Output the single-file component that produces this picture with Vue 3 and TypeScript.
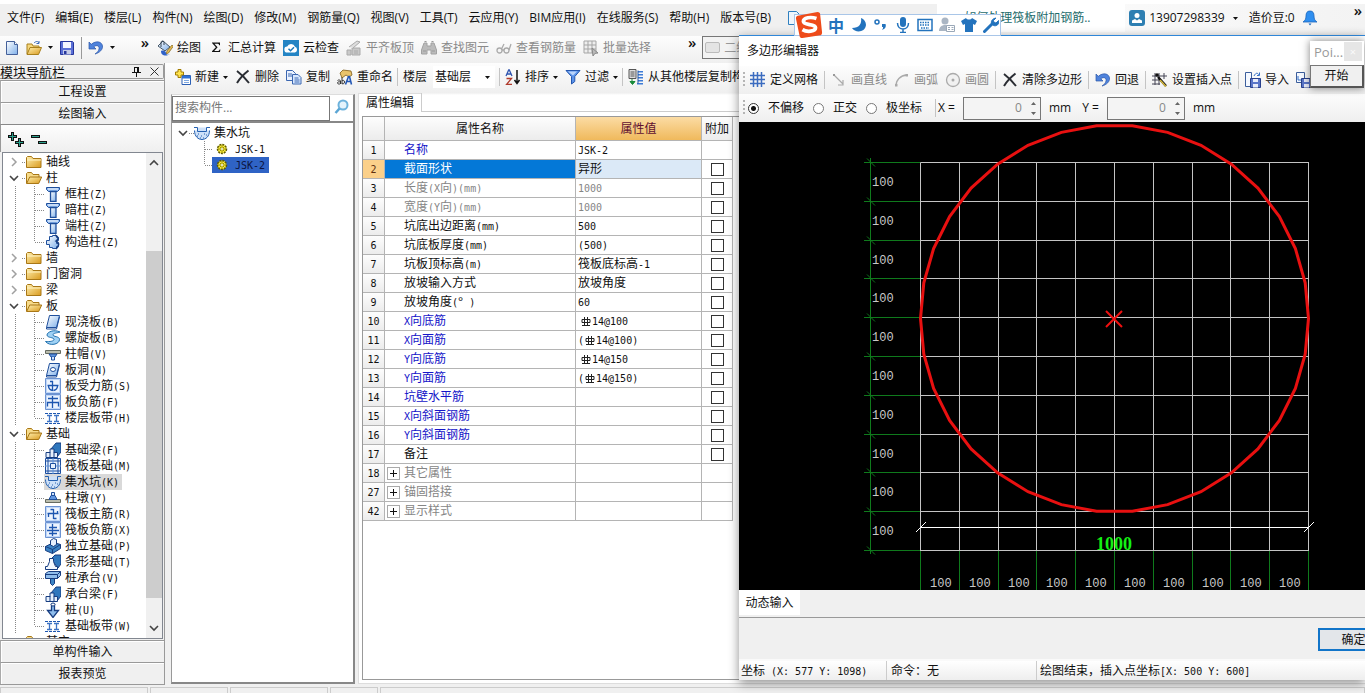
<script setup lang="ts">
import { h, ref } from 'vue'

/** Text whose Latin runs are set in the half-width face. */
const T = (props: { v: string }) =>
  h('span', { class: 'grid-text' }, props.v.split(/([\x20-\x7e]+)/).filter(Boolean).map((part) =>
    /^[\x20-\x7e]/.test(part) ? h('span', { class: 'half' }, part) : part))
T.props = ['v']

const menus = ['文件(F)', '编辑(E)', '楼层(L)', '构件(N)', '绘图(D)', '修改(M)', '钢筋量(Q)', '视图(V)', '工具(T)', '云应用(Y)', 'BIM应用(I)', '在线服务(S)', '帮助(H)', '版本号(B)']

const mainTools = [
  { icon: 'paint', label: '绘图', off: false },
  { icon: 'sigma', label: '汇总计算', off: false },
  { icon: 'cloud', label: '云检查', off: false },
  { icon: 'level', label: '平齐板顶', off: true },
  { icon: 'binoc', label: '查找图元', off: true },
  { icon: 'glasses', label: '查看钢筋量', off: true },
  { icon: 'gridsel', label: '批量选择', off: true },
]

type Leaf = { label: string; icon: string; on?: boolean }
type Branch = { label: string; open: boolean; items: Leaf[] }
const modules: Branch[] = [
  { label: '轴线', open: false, items: [] },
  { label: '柱', open: true, items: [
    { label: '框柱(Z)', icon: 'col' }, { label: '暗柱(Z)', icon: 'col' },
    { label: '端柱(Z)', icon: 'col' }, { label: '构造柱(Z)', icon: 'gcol' }] },
  { label: '墙', open: false, items: [] },
  { label: '门窗洞', open: false, items: [] },
  { label: '梁', open: false, items: [] },
  { label: '板', open: true, items: [
    { label: '现浇板(B)', icon: 'slab' }, { label: '螺旋板(B)', icon: 'spiral' },
    { label: '柱帽(V)', icon: 'cap' }, { label: '板洞(N)', icon: 'hole' },
    { label: '板受力筋(S)', icon: 'barS' }, { label: '板负筋(F)', icon: 'barF' },
    { label: '楼层板带(H)', icon: 'band' }] },
  { label: '基础', open: true, items: [
    { label: '基础梁(F)', icon: 'beam' }, { label: '筏板基础(M)', icon: 'raft' },
    { label: '集水坑(K)', icon: 'pit', on: true }, { label: '柱墩(Y)', icon: 'pier' },
    { label: '筏板主筋(R)', icon: 'barR' }, { label: '筏板负筋(X)', icon: 'barX' },
    { label: '独立基础(P)', icon: 'indep' }, { label: '条形基础(T)', icon: 'stripf' },
    { label: '桩承台(V)', icon: 'pilecap' }, { label: '承台梁(F)', icon: 'beam' },
    { label: '桩(U)', icon: 'pile' }, { label: '基础板带(W)', icon: 'band' }] },
  { label: '其它', open: true, items: [] },
]

type Prop = { n: number; name: string; tone: string; pre?: string; bar?: boolean; val?: string; box?: boolean; group?: boolean }
const props: Prop[] = [
  { n: 1, name: '名称', tone: 'blue', val: 'JSK-2' },
  { n: 2, name: '截面形状', tone: 'sel', val: '异形', box: true },
  { n: 3, name: '长度(X向)(mm)', tone: 'gray', val: '1000', box: true },
  { n: 4, name: '宽度(Y向)(mm)', tone: 'gray', val: '1000', box: true },
  { n: 5, name: '坑底出边距离(mm)', tone: '', val: '500', box: true },
  { n: 6, name: '坑底板厚度(mm)', tone: '', val: '(500)', box: true },
  { n: 7, name: '坑板顶标高(m)', tone: '', val: '筏板底标高-1', box: true },
  { n: 8, name: '放坡输入方式', tone: '', val: '放坡角度', box: true },
  { n: 9, name: '放坡角度(° )', tone: '', val: '60', box: true },
  { n: 10, name: 'X向底筋', tone: 'blue', bar: true, val: '14@100', box: true },
  { n: 11, name: 'X向面筋', tone: 'blue', pre: '(', bar: true, val: '14@100)', box: true },
  { n: 12, name: 'Y向底筋', tone: 'blue', bar: true, val: '14@150', box: true },
  { n: 13, name: 'Y向面筋', tone: 'blue', pre: '(', bar: true, val: '14@150)', box: true },
  { n: 14, name: '坑壁水平筋', tone: 'blue', box: true },
  { n: 15, name: 'X向斜面钢筋', tone: 'blue', box: true },
  { n: 16, name: 'Y向斜面钢筋', tone: 'blue', box: true },
  { n: 17, name: '备注', tone: '', box: true },
  { n: 18, name: '其它属性', tone: 'gray', group: true },
  { n: 27, name: '锚固搭接', tone: 'gray', group: true },
  { n: 42, name: '显示样式', tone: 'gray', group: true },
]

const floor = ref('基础层')
const mode = ref('none')
const modes = [{ id: 'none', label: '不偏移' }, { id: 'ortho', label: '正交' }, { id: 'polar', label: '极坐标' }]
const offX = ref(0)
const offY = ref(0)

/* drawing geometry */
const left = 181.5
const top = 40.5
const cell = 38.8
const lines = Array.from({ length: 11 }, (_, i) => i)
const at = (base: number, i: number) => Math.floor(base + i * cell) + 0.5
const outline = Array.from({ length: 34 }, (_, i) => {
  const a = (i * 2 * Math.PI) / 34
  return `${(375.5 + 194 * Math.cos(a)).toFixed(1)},${(196.5 + 193.5 * Math.sin(a)).toFixed(1)}`
}).join(' ')
</script>

<template>
  <svg class="defs" width="0" height="0" aria-hidden="true">
    <defs>
      <linearGradient id="gb" x1="0" y1="0" x2="1" y2="1"><stop offset="0" stop-color="#fff" /><stop offset="1" stop-color="#7fb0ea" /></linearGradient>
      <linearGradient id="gy" x1="0" y1="0" x2="1" y2="1"><stop offset="0" stop-color="#fff0b0" /><stop offset="1" stop-color="#d99a1e" /></linearGradient>
      <symbol id="new" viewBox="0 0 16 16"><path d="M2.500 1.500h8l3 3v10h-11z" fill="url(#gb)" stroke="#44609a" /><path d="M10.500 1.500v3h3" fill="#fff" stroke="#44609a" /></symbol>
      <symbol id="open" viewBox="0 0 16 16"><path d="M1 14V4h5l1 2h6v3" fill="#f6d77c" stroke="#a8801c" /><path d="M1 14.500l3-7h11.500l-3 7z" fill="url(#gy)" stroke="#a8801c" /><path d="M8 3c2-2 4-2 5 0m0-2v2.500h-2.500" fill="none" stroke="#3768b8" /></symbol>
      <symbol id="save" viewBox="0 0 16 16"><path d="M1.500 1.500h12l1 1v12h-13z" fill="#5a6fd6" stroke="#26369c" /><path d="M4 2h8v6H4z" fill="#f4f6ff" /><path d="M4 10h8v4.500H4z" fill="#c5cce8" /><path d="M5 11h2.500v3H5z" fill="#26369c" /></symbol>
      <symbol id="undo" viewBox="0 0 16 16"><path d="M1 2v7h7L5.800 6.800c3-2.500 6-.5 5.200 2.200-.4 2-2 3.600-4 5 4.600-1.200 8-4.500 7.500-8C14 1.800 8.500 0 3.300 4.300z" fill="#4f83dc" stroke="#2b56a8" stroke-width=".7" /></symbol>
      <symbol id="paint" viewBox="0 0 16 16"><path d="M6 1l7 6-5 4-7-5z" fill="url(#gb)" stroke="#456" /><path d="M4 7V2.500C4 .5 7 .5 7 2.500V5" fill="none" stroke="#345" /><path d="M9 14l1-3 5-6 1.300 1.300L11.500 13z" fill="#e5bb50" stroke="#6d5210" stroke-width=".6" /><path d="M4 11c2-1 5 0 5 2s2 2 4 1c-2 2-9 3-9-3z" fill="#2f62c8" /></symbol>
      <symbol id="sigma" viewBox="-2 -1 20 20"><path d="M3 2h10v3.500h-1C11.600 4 11 3.600 9.500 3.600H6L10 8l-4.200 4.800h4c1.600 0 2.200-.5 2.700-2h1L13 14H3v-.8L7.800 8.200 3 2.800z" fill="#111" /></symbol>
      <symbol id="cloud" viewBox="0 0 16 16"><path d="M0 0h16v16H0z" fill="#2384c4" /><path d="M4.500 12.500a3 3 0 0 1-.3-6A4.200 4.200 0 0 1 12 6.800a3 3 0 0 1 0 5.700z" fill="#fff" /><path d="M5.500 8.800l2 2 3.500-3.500" fill="none" stroke="#1a78b8" stroke-width="1.500" /></symbol>
      <symbol id="level" viewBox="0 0 16 16"><path d="M1 10h4v5H1zM6 8h8v7H6z" fill="#c9c9c9" stroke="#aaa" /><path d="M3 7l8-6 3 1-7 6M8 11h4M8 13h4" fill="#ddd" stroke="#aaa" /></symbol>
      <symbol id="binoc" viewBox="0 0 16 16"><path d="M3 3h3v3h4V3h3l2.500 7v4H10v-4H6v4H.500v-4z" fill="#bbb" stroke="#a2a2a2" /><path d="M3.500 1.500h2M10.500 1.500h2M2 11h3M11 11h3" stroke="#999" /></symbol>
      <symbol id="glasses" viewBox="0 0 16 16"><g fill="none" stroke="#aaa" stroke-width="1.300"><circle cx="3.500" cy="10.500" r="2.500" /><circle cx="10.500" cy="10.500" r="2.500" /><path d="M6 10h2M5.500 9l2.500-5M13 10l2-6" /></g></symbol>
      <symbol id="gridsel" viewBox="0 0 16 16"><path d="M1 1h12v12H1zM1 5h12M1 9h12M5 1v12M9 1v12" fill="#eee" stroke="#a5a5a5" /><path d="M9 8l6 5-3 .3L10 16z" fill="#bbb" stroke="#888" /></symbol>
      <symbol id="add" viewBox="0 0 16 16"><path d="M7 6.500h8.500v9H7z" fill="#fff" stroke="#2b5fb4" /><path d="M7 7h8.500v2.500H7z" fill="#2f71d6" /><path d="M9 11.500h5M9 13.500h5" stroke="#7fa8e0" /><path d="M3 .500h3v2.500h2.500v3H6v2.500H3V6H.500V3H3z" fill="#ffe34d" stroke="#a27c00" /></symbol>
      <symbol id="del" viewBox="0 0 16 16"><path d="M2 2c4 3 8 7 12 12M13.500 1.500C9 5 5 9 2 14" fill="none" stroke="#2a2d33" stroke-width="2" /></symbol>
      <symbol id="copy" viewBox="0 0 16 16"><path d="M.500 1.500h6l3 3v7h-9z" fill="#eaf2ff" stroke="#3b66b0" /><path d="M6.500 5.500h5.500l3 3v6.500H6.500z" fill="#d8e8ff" stroke="#3b66b0" /><path d="M2 5h4M2 7h4M8.500 9h4M8.500 11h5M8.500 13h5" stroke="#3b66b0" /></symbol>
      <symbol id="rename" viewBox="0 0 16 16"><path d="M3 4l3-3 8 1 1 4-3 2-3-2-4 3z" fill="#e9c36b" stroke="#7d5a15" stroke-width=".8" /><path d="M8.500 15.500l3-8h1l2 8m-5-3h4.500" fill="none" stroke="#2357b5" stroke-width="1.600" /><path d="M.500 11.500c1-1 3-.5 3 .5v3m0-2c-2-.5-3 0-3 1s2 1.500 3 .5M5 8.500v6.500m0-3c1-1.500 2.500-.5 2.500 1S6 15.500 5 14.500" fill="none" stroke="#333" /></symbol>
      <symbol id="sort" viewBox="0 0 16 16"><path d="M1 7l2.700-6h.6L7 7M2 5h4" fill="none" stroke="#2f55b0" stroke-width="1.300" /><path d="M1.500 9.500h5l-5 6h5.500" fill="none" stroke="#b03a2c" stroke-width="1.300" /><path d="M12 1v13M9.500 11l2.500 3.500L14.500 11" fill="none" stroke="#111" stroke-width="1.500" /></symbol>
      <symbol id="filter" viewBox="0 0 16 16"><path d="M1 1.500h14L9.800 7.500v5L6.500 15V7.500z" fill="#5b93ea" stroke="#2456ae" /><path d="M3 2.500h9L8 6.500" fill="#b9d4fb" /></symbol>
      <symbol id="fcopy" viewBox="0 0 16 16"><path d="M1 .500h7v9H1zM2.500 3h4M2.500 5h4M2.500 7h4" fill="#ddd" stroke="#555" /><path d="M4 10v3M2 12.500h5L4.500 15.500z" stroke="#188a3a" fill="#188a3a" /><path d="M10 2h5v1.500h-5zM10 5h5v1.500h-5zM10 8h5v1.500h-5zM10 11h5v1.500h-5zM9 14h6v1.500H9z" fill="#3c7bd6" /><path d="M10 1.500v13" stroke="#2355a0" /></symbol>
      <symbol id="search" viewBox="0 0 16 16"><circle cx="9" cy="6" r="4.500" fill="#e4f3fc" stroke="#6db2dc" stroke-width="2" /><path d="M5.500 9.500L1.500 14" stroke="#5aa5d4" stroke-width="2.500" /></symbol>
      <symbol id="user" viewBox="0 0 16 16"><rect width="16" height="16" rx="3" fill="#2e7fb2" /><circle cx="8" cy="5.500" r="2.500" fill="#fff" /><path d="M3 13v-2.500l3-1.500 2 1.500L10 9l3 1.500V13z" fill="#fff" /></symbol>
      <symbol id="bell" viewBox="0 0 16 16"><path d="M8 1c3 0 4 2 4 5 0 3 .8 4.500 3 6H1c2.200-1.500 3-3 3-6 0-3 1-5 4-5z" fill="#2f8ff0" stroke="#1c66bb" stroke-width=".8" /><path d="M6.500 13.500h3L8 15.500z" fill="#1c66bb" /></symbol>
      <symbol id="gridb" viewBox="0 0 16 16"><path d="M3.500 0v15M7.500 0v15M11.500 0v15M0 3.500h15M0 7.500h15M0 11.500h15" stroke="#3b6cc0" stroke-width="1.500" fill="none" /></symbol>
      <symbol id="line" viewBox="0 0 16 16"><path d="M3 3l9 9M12 8v5H7" fill="none" stroke="#aaa" stroke-width="1.200" /><path d="M2 2h2v2H2z" fill="#999" /></symbol>
      <symbol id="arc" viewBox="0 0 16 16"><path d="M2 14C2 8 6 3.500 13 3" fill="none" stroke="#aaa" stroke-width="1.300" /><path d="M1 12h2.500v2.500H1zM11.500 2H14v2.500h-2.500z" fill="#aaa" /></symbol>
      <symbol id="circle" viewBox="0 0 16 16"><circle cx="8" cy="8" r="6.500" fill="#f1f1f1" stroke="#aaa" stroke-width="1.300" /><circle cx="8" cy="8" r="1.500" fill="#aaa" /></symbol>
      <symbol id="insert" viewBox="0 0 16 16"><path d="M3 1v12M7 1v12M12 1v6M0 4h15M0 8h9M0 12h8" stroke="#445" fill="none" /><path d="M6 5l8 9" stroke="#111" stroke-width="2.500" /><path d="M8 8l6 6.500" stroke="#d9bb3c" stroke-width="1.500" /><circle cx="5" cy="3" r="1.800" fill="#111" /></symbol>
      <symbol id="import" viewBox="0 0 16 16"><path d="M.500.500h6v14h-6z" fill="#f4f8ff" stroke="#3c5e9c" /><path d="M5.500 6.500h10v9h-10z" fill="#5a75c8" stroke="#28408c" /><path d="M8 7h5v3H8zM8 12h5v3.500H8z" fill="#e8ecfa" /><path d="M9 4c2-4 4-3 5-1m.5-2.500V3.500H12" fill="none" stroke="#3571c8" /></symbol>
      <symbol id="export" viewBox="0 0 16 16"><path d="M.500.500h8v10h-8z" fill="#f4f8ff" stroke="#3c5e9c" /><path d="M5.500 6.500h10v9h-10z" fill="#5a75c8" stroke="#28408c" /><path d="M8 7h5v3H8zM8 12h5v3.500H8z" fill="#e8ecfa" /><path d="M2 4v4h3" fill="none" stroke="#3571c8" /></symbol>
      <symbol id="folder" viewBox="0 0 16 16"><path d="M.500 13.500v-10l1-1h4l1.500 2h8v9z" fill="url(#gy)" stroke="#a87716" /><path d="M1 6h14" stroke="#fff3c4" /></symbol>
      <symbol id="fopen" viewBox="0 0 16 16"><path d="M.500 13.500v-10l1-1h4l1.500 2h6v3" fill="#f7dc8c" stroke="#a87716" /><path d="M.700 13.500l3-6.500h12l-3 6.500z" fill="url(#gy)" stroke="#a87716" /></symbol>
      <symbol id="col" viewBox="0 0 16 16"><path d="M1.500 1.500h13v2l-2 2h-9l-2-2z" fill="#8db7ee" stroke="#1f4f9c" /><path d="M5.500 5.500h5.500v10H5.500z" fill="url(#gb)" stroke="#1f4f9c" stroke-width="1.300" /><path d="M3 3h10" stroke="#fff" /></symbol>
      <symbol id="gcol" viewBox="0 0 16 16"><path d="M4.500 2.500h3v-1h4v2h2v3h-2v3h2v3h-2v2h-4v-1h-3v-3h-3v-4h3z" fill="url(#gb)" stroke="#1f4f9c" /><path d="M10 1c4 2 4 4 1 6 4 2 3 5 0 8" fill="none" stroke="#173d80" stroke-width="1.500" /></symbol>
      <symbol id="slab" viewBox="0 0 16 16"><path d="M4.500 1.500h10l-3 12h-10z" fill="url(#gb)" stroke="#1f4f9c" /><path d="M1.500 13.500v1.500h10l3-12" fill="none" stroke="#1f4f9c" /></symbol>
      <symbol id="spiral" viewBox="0 0 16 16"><path d="M15 2C9-1 2 2 2 5c0 3 7 2 7 4.500C9 11 5 12 .500 11.500c4 5 14 3 14-2C14.500 6 8 7 8 4.800 8 3 12 3 15 2z" fill="#9fd2f5" stroke="#2070ae" /></symbol>
      <symbol id="cap" viewBox="0 0 16 16"><path d="M.500 4.500h15v3H.500z" fill="#b9bcae" stroke="#666b60" /><path d="M4 8h8l-2 3H6z" fill="#5f95df" stroke="#1f4f9c" /><path d="M6.500 11v3h3v-3" fill="#cfe2fb" stroke="#1f4f9c" /></symbol>
      <symbol id="hole" viewBox="0 0 16 16"><path d="M4.500 1.500h10l-3 12h-10z" fill="url(#gb)" stroke="#1f4f9c" /><path d="M1.500 13.500v1.500h10l3-12" fill="none" stroke="#1f4f9c" /><ellipse cx="8" cy="7.500" rx="2.500" ry="2" fill="#fff" stroke="#1f4f9c" /></symbol>
      <symbol id="frame" viewBox="0 0 16 16"><path d="M.500.500h15v15H.500z" fill="#c0d7f8" stroke="#6c93d2" /><path d="M2 2h12v12H2z" fill="#edf4fe" /></symbol>
      <symbol id="barS" viewBox="0 0 16 16"><use href="#frame" /><path d="M2.500 7.500h11M7.500 3v10M5 3.500h3M3.500 8c0 3 2 4 4 4.500M12.500 8c0 3-2 4-4 4.500" fill="none" stroke="#1d56b0" stroke-width="1.300" /></symbol>
      <symbol id="barF" viewBox="0 0 16 16"><use href="#frame" /><path d="M3 4.500h10M7.500 2v12M2.500 12.500v-4h11v4" fill="none" stroke="#1d56b0" stroke-width="1.300" /></symbol>
      <symbol id="barR" viewBox="0 0 16 16"><use href="#frame" /><path d="M2.500 7.500h11M8.500 3v10M5.500 3.500h3M8.500 12.500h3M3.500 8v3M12.500 5v3" fill="none" stroke="#1d56b0" stroke-width="1.300" /></symbol>
      <symbol id="barX" viewBox="0 0 16 16"><use href="#frame" /><path d="M2 8.500h12M7.500 2v12M4 5.500h8M4 11.500h8" fill="none" stroke="#1d56b0" stroke-width="1.300" /></symbol>
      <symbol id="band" viewBox="0 0 16 16"><path d="M0 3.500h16M0 13.500h16" stroke="#1d56b0" stroke-dasharray="3 1" /><path d="M4.500 5v7M11.500 5v7M2 5.500h5M9 5.500h5M2 11.500h5M9 11.500h5" stroke="#3d73c4" fill="none" stroke-width="1.300" /></symbol>
      <symbol id="beam" viewBox="0 0 16 16"><path d="M6 7l5-6h5v9l-4 5z" fill="#2f77bd" stroke="#173d80" /><path d="M1 15.500v-5h4V7h4v3.500h3.500v5z" fill="#e6f0fd" stroke="#173d80" /><path d="M5 10v5M9 10v5" stroke="#173d80" /></symbol>
      <symbol id="raft" viewBox="0 0 16 16"><path d="M.500.500h15v15H.500z" fill="#e6f0fd" stroke="#1d4f9f" /><path d="M3 0v16M13 0v16M0 3h16M0 13h16M5.500 5.500h5v5h-5z" fill="none" stroke="#1d4f9f" /><path d="M8 0v5M8 11v5M0 8h5M11 8h5" stroke="#5f92d8" /></symbol>
      <symbol id="pit" viewBox="0 0 16 16"><path d="M0 2.500h3.500v4h9v-4H16M.500 5.500c0 12 15 12 15 0" fill="#cde0f8" stroke="#2460b0" /><path d="M4 9h1M7 11h1M10 9h1M6 13h1M9 13h1M12 10h1M3 11h1" stroke="#2460b0" /></symbol>
      <symbol id="pier" viewBox="0 0 16 16"><path d="M.500 9.500h15v3H.500z" fill="#b9bcae" stroke="#666b60" /><path d="M6.500 2.500h3v3h-3z" fill="#cfe2fb" stroke="#1f4f9c" /><path d="M6 5.500h4l2 4H4z" fill="#5f95df" stroke="#1f4f9c" /></symbol>
      <symbol id="indep" viewBox="0 0 16 16"><path d="M.500 8.500l8-4 7 2v4l-8 5-7-3z" fill="#3b83c4" stroke="#173d80" /><path d="M.500 8.500l7 3 8-5M7.500 11.500v4" fill="none" stroke="#173d80" /><path d="M5.500 2.500l3-2 3 1v5l-3 2-3-1.500z" fill="#e6f0fd" stroke="#173d80" /></symbol>
      <symbol id="stripf" viewBox="0 0 16 16"><path d="M6 5l4-4h6v9l-3 4z" fill="#2f77bd" stroke="#173d80" /><path d="M.500 15.500v-3h2l2-5V4.500h4v3l2 5h2v3z" fill="#f3f8fe" stroke="#173d80" /></symbol>
      <symbol id="pilecap" viewBox="0 0 16 16"><path d="M.500 3.500l3-2h12v4l-3 3H.500z" fill="#8fbdec" stroke="#173d80" /><path d="M.500 4.500h12l3-3M12.500 4.500v4" fill="none" stroke="#173d80" /><path d="M5.500 8.500h4v5l-2 2-2-2z" fill="#3b83c4" stroke="#173d80" /></symbol>
      <symbol id="pile" viewBox="0 0 16 16"><path d="M6.500 2.500h3v6h4L8 15.500 2.500 8.500h4z" fill="#8fbdec" stroke="#173d80" stroke-width="1.300" /><ellipse cx="8" cy="2.500" rx="2" ry="1.500" fill="#fff" stroke="#173d80" /></symbol>
      <symbol id="gear" viewBox="0 0 12 12"><circle cx="6" cy="6" r="4.500" fill="#ffef3a" stroke="#5f5a00" stroke-width="1.500" stroke-dasharray="2 1" /><path d="M6 2v8M2 6h8M3.500 3.500l5 5M8.500 3.500l-5 5" stroke="#7a7400" stroke-width=".8" /><circle cx="6" cy="6" r="1" fill="#fff" /></symbol>
      <symbol id="tri" viewBox="0 0 5 3"><path d="M0 0h5L2.500 3z" fill="#111" /></symbol>
      <symbol id="right" viewBox="0 0 10 10"><path d="M3 1l4 4-4 4" fill="none" stroke="#a0a0a0" stroke-width="1.500" /></symbol>
      <symbol id="down" viewBox="0 0 10 10"><path d="M1 3l4 4 4-4" fill="none" stroke="#444" stroke-width="1.600" /></symbol>
      <symbol id="up" viewBox="0 0 10 10"><path d="M1 7l4-4 4 4" fill="none" stroke="#444" stroke-width="1.600" /></symbol>
    </defs>
  </svg>

  <div class="app">
    <header class="menubar">
      <nav class="menus">
        <button v-for="m in menus" :key="m" class="menu">{{ m }}</button>
      </nav>
      <svg class="i16 newproj" viewBox="0 0 16 16"><path d="M1.500 1.500h8l4 4v9h-12z" fill="#eef6fd" stroke="#2f80c0" /></svg>
      <div class="account">
        <a class="promo" href="#">如何处理筏板附加钢筋..</a>
        <svg class="i16"><use href="#user" /></svg>
        <button class="menu phone">13907298339<svg class="tri"><use href="#tri" /></svg></button>
        <span class="beans">造价豆:0</span>
        <svg class="i16"><use href="#bell" /></svg>
        <span class="more">»</span>
      </div>
    </header>

    <div class="toolbar top-tools">
      <div class="quick">
        <button class="tool" aria-label="新建工程"><svg class="i16"><use href="#new" /></svg></button>
        <button class="tool" aria-label="打开"><svg class="i16"><use href="#open" /></svg><svg class="tri"><use href="#tri" /></svg></button>
        <button class="tool" aria-label="保存"><svg class="i16"><use href="#save" /></svg></button>
        <i class="sep dark"></i>
        <button class="tool" aria-label="撤销"><svg class="i16"><use href="#undo" /></svg><svg class="tri"><use href="#tri" /></svg></button>
        <span class="more">»</span>
      </div>
      <div class="main-tools">
        <button v-for="t in mainTools" :key="t.label" class="tool" :disabled="t.off"><svg class="i16"><use :href="'#' + t.icon" /></svg>{{ t.label }}</button>
      </div>
      <span class="more">»</span>
      <button class="view" disabled><i></i>二维</button>
    </div>

    <div class="body">
      <aside class="dock">
        <div class="caption">模块导航栏
          <span class="caption-btns">
            <svg width="9" height="10" viewBox="0 0 9 10"><path d="M2.500 0v5M6.500 0v5M2 .500h5M0 5.500h9M4.500 6v4M5.500 0v5" stroke="#111" fill="none" /></svg>
            <svg width="9" height="9" viewBox="0 0 9 9"><path d="M.500.500l8 8M8.500.500l-8 8" stroke="#333" fill="none" /></svg>
          </span>
        </div>
        <button class="bar">工程设置</button>
        <button class="bar">绘图输入</button>
        <div class="expand">
          <svg width="40" height="16" viewBox="0 0 40 16"><path d="M4.500 0v9M0 4.500h9M11.500 6v9M7 10.500h9" stroke="#111" stroke-width="3" /><path d="M4.500 1v7M1 4.500h7M11.500 7v7M8 10.500h7" stroke="#2ba08c" /><path d="M23 4.500h9M30 10.500h9" stroke="#111" stroke-width="3" /><path d="M24 4.500h7M31 10.500h7" stroke="#2ba08c" /></svg>
        </div>
        <div class="tree-box">
          <div class="tree">
            <template v-for="b in modules" :key="b.label">
              <div class="row branch">
                <svg class="chev"><use :href="b.open ? '#down' : '#right'" /></svg><i class="hdots"></i>
                <svg class="i16"><use :href="b.open ? '#fopen' : '#folder'" /></svg>
                <span class="lbl"><T :v="b.label" /></span>
              </div>
              <div v-for="(l, k) in b.items" :key="l.label" class="row leaf">
                <i class="v1"></i><i class="v2" :class="{ last: k === b.items.length - 1 }"></i><i class="hdots"></i>
                <span class="node" :class="{ on: l.on }"><svg class="i16"><use :href="'#' + l.icon" /></svg><T :v="l.label" /></span>
              </div>
            </template>
          </div>
          <div class="scroll">
            <svg class="chev"><use href="#up" /></svg>
            <i class="thumb"></i>
            <svg class="chev"><use href="#down" /></svg>
          </div>
        </div>
        <button class="bar low">单构件输入</button>
        <button class="bar low">报表预览</button>
      </aside>

      <main class="work">
        <div class="toolbar comp-tools">
          <button class="tool"><svg class="i16"><use href="#add" /></svg>新建<svg class="tri"><use href="#tri" /></svg></button>
          <button class="tool"><svg class="i16"><use href="#del" /></svg>删除</button>
          <button class="tool"><svg class="i16"><use href="#copy" /></svg>复制</button>
          <button class="tool"><svg class="i16"><use href="#rename" /></svg>重命名</button>
          <i class="sep"></i>
          <label class="floor">楼层
            <span class="combo"><select v-model="floor"><option>基础层</option></select><svg class="tri"><use href="#tri" /></svg></span>
          </label>
          <i class="sep"></i>
          <button class="tool"><svg class="i16"><use href="#sort" /></svg>排序<svg class="tri"><use href="#tri" /></svg></button>
          <button class="tool"><svg class="i16"><use href="#filter" /></svg>过滤<svg class="tri"><use href="#tri" /></svg></button>
          <i class="sep"></i>
          <button class="tool"><svg class="i16"><use href="#fcopy" /></svg>从其他楼层复制构件</button>
        </div>
        <div class="panels">
          <section class="comps">
            <div class="find">
              <input type="text" aria-label="搜索构件" placeholder="搜索构件..." />
              <button aria-label="搜索"><svg class="i16"><use href="#search" /></svg></button>
            </div>
            <div class="comp-tree">
              <div class="row croot"><svg class="chev"><use href="#down" /></svg><i class="hdots"></i><svg class="i16"><use href="#pit" /></svg><span class="lbl">集水坑</span></div>
              <div class="row cleaf"><i class="v2"></i><i class="hdots"></i><span class="cnode"><svg class="i12"><use href="#gear" /></svg><T v="JSK-1" /></span></div>
              <div class="row cleaf"><i class="v2 last"></i><i class="hdots"></i><span class="cnode on"><svg class="i12"><use href="#gear" /></svg><T v="JSK-2" /></span></div>
            </div>
          </section>
          <section class="props">
            <div class="tabs"><button class="tab">属性编辑</button><i></i></div>
            <div class="sheet">
              <table>
                <colgroup><col class="c-n" /><col class="c-name" /><col class="c-val" /><col class="c-add" /></colgroup>
                <thead><tr><th></th><th>属性名称</th><th class="hot">属性值</th><th>附加</th></tr></thead>
                <tbody>
                  <tr v-for="p in props" :key="p.n" :class="p.tone">
                    <th scope="row"><T :v="String(p.n)" /></th>
                    <td class="name"><div><button v-if="p.group" class="plus" :aria-label="'展开' + p.name"><svg width="11" height="11" viewBox="0 0 11 11"><path d="M2 5.500h7M5.500 2v7" stroke="#111" /></svg></button><i v-else class="plus-gap"></i><T :v="p.name" /></div></td>
                    <td class="val"><div><T v-if="p.pre" :v="p.pre" /><svg v-if="p.bar" class="rebar" :class="{ first: !p.pre }" width="10" height="10" viewBox="0 0 10 10"><path d="M1 3.500h8v3H1zM3.500 1v8M6.500 1v8M1 9.500h8" fill="none" stroke="#222" /></svg><T v-if="p.val" :v="p.val" /></div></td>
                    <td class="add"><input v-if="p.box" type="checkbox" :aria-label="'附加 ' + p.name" /></td>
                  </tr>
                </tbody>
              </table>
            </div>
          </section>
        </div>
      </main>
    </div>
    <footer class="strip"><i class="s1"></i><i class="s2"></i><i class="s3"></i><i class="s4"></i><i class="s5"></i></footer>

    <section class="dialog" role="dialog" aria-label="多边形编辑器">
      <div class="title">多边形编辑器</div>
      <div class="toolbar dlg-tools">
        <i class="grip"></i>
        <button class="tool"><svg class="i16"><use href="#gridb" /></svg>定义网格</button>
        <i class="sep"></i>
        <button class="tool" disabled><svg class="i16"><use href="#line" /></svg>画直线</button>
        <button class="tool" disabled><svg class="i16"><use href="#arc" /></svg>画弧</button>
        <button class="tool" disabled><svg class="i16"><use href="#circle" /></svg>画圆</button>
        <i class="sep"></i>
        <button class="tool"><svg class="i16"><use href="#del" /></svg>清除多边形</button>
        <i class="sep"></i>
        <button class="tool"><svg class="i16"><use href="#undo" /></svg>回退</button>
        <i class="sep"></i>
        <button class="tool"><svg class="i16"><use href="#insert" /></svg>设置插入点</button>
        <i class="sep"></i>
        <button class="tool"><svg class="i16"><use href="#import" /></svg>导入</button>
        <button class="tool" aria-label="导出"><svg class="i16"><use href="#export" /></svg></button>
      </div>
      <div class="toolbar dlg-opts">
        <i class="grip"></i>
        <label v-for="m in modes" :key="m.id" class="radio"><input v-model="mode" type="radio" name="mode" :value="m.id" />{{ m.label }}</label>
        <i class="sep"></i>
        <label class="num">X =<span class="spin"><input v-model="offX" type="number" disabled /><svg width="7" height="15" viewBox="0 0 7 15"><path d="M1 4l2.500-3L6 4zM1 11l2.500 3L6 11z" fill="#666" /></svg></span>mm</label>
        <label class="num">Y =<span class="spin"><input v-model="offY" type="number" disabled /><svg width="7" height="15" viewBox="0 0 7 15"><path d="M1 4l2.500-3L6 4zM1 11l2.500 3L6 11z" fill="#666" /></svg></span>mm</label>
      </div>
      <svg class="canvas" role="img" aria-label="截面">
        <g stroke="#0f7a1c" fill="none">
          <path :d="`M131.500 36V432`" />
          <template v-for="i in lines" :key="i">
            <path :d="`M125 ${at(top, i)}H${left}M128 ${at(top, i) - 4}l8 8`" />
            <path :d="`M${at(left, i)} 428V470`" />
          </template>
        </g>
        <g stroke="#c4c4c4" fill="none">
          <path v-for="i in lines" :key="i" :d="`M${left} ${at(top, i)}H570M${at(left, i)} ${top}V429`" />
        </g>
        <path d="M181 405.500H570M177 410l10-10M565 410l10-10" stroke="#fff" fill="none" />
        <g class="dims">
          <text v-for="i in 10" :key="'v' + i" x="133" :y="Math.round(64 + (i - 1) * cell)">100</text>
          <text v-for="i in 10" :key="'h' + i" :x="Math.round(191 + (i - 1) * cell)" y="465">100</text>
        </g>
        <text class="total" x="375" y="428">1000</text>
        <polygon :points="outline" fill="none" stroke="#e81010" stroke-width="3" />
        <path d="M367 189l16 16M383 189l-16 16" stroke="#f01010" stroke-width="2" />
      </svg>
      <div class="dyn"><button>动态输入</button></div>
      <div class="actions"><button>确定</button></div>
      <div class="status">
        <span class="st1"><T v="坐标 (X: 577 Y: 1098)" /></span>
        <span class="st2">命令：无</span>
        <span class="st3"><T v="绘图结束，插入点坐标[X: 500 Y: 600]" /></span>
      </div>
    </section>

    <div class="ime">
      <svg class="logo" width="28" height="30" viewBox="0 0 30 30"><path d="M3 5L24 1c2 0 3 1 3 3l2 19c0 2-1 3-2 3L8 29c-2 0-3-1-3-2L1 8c0-2 1-3 2-3z" fill="#ee4b1a" /><path d="M23 8c-6-2-14-1-14 3 0 5 13 2 13 7 0 4-9 5-14 2" fill="none" stroke="#fff" stroke-width="4" /></svg>
      <span class="zh">中</span>
      <svg class="i16" viewBox="0 0 16 16"><path d="M10 1c1 6-2 10-9 10 3 5 13 5 14-3 0-3-2-6-5-7z" fill="#2373bd" /></svg>
      <svg class="i16" viewBox="0 0 16 16"><circle cx="4" cy="5" r="2" fill="none" stroke="#2373bd" stroke-width="1.500" /><path d="M9 7h3.500c1 3-.5 5-3.500 6 1-1.500 1.200-2 1-3H9z" fill="#2373bd" /></svg>
      <svg class="i16" viewBox="0 0 16 16"><rect x="5" y="0" width="6" height="10" rx="3" fill="#2373bd" /><path d="M2.500 6c0 8 11 8 11 0M8 12v3M5 15.500h6" fill="none" stroke="#2373bd" stroke-width="1.500" /></svg>
      <svg class="i16" viewBox="0 0 16 16"><path d="M1 2.500h14v11H1z" fill="#fff" stroke="#2373bd" stroke-width="1.500" /><path d="M3 5.500h10M3 8h10M4 11h8" stroke="#2373bd" stroke-width="1.500" stroke-dasharray="1.500 1" /></svg>
      <svg class="i16" viewBox="0 0 16 16"><circle cx="6" cy="4" r="3.500" fill="#aab6c4" /><path d="M0 14c0-8 12-8 12 0z" fill="#aab6c4" /><path d="M7.500 8.500h8v6h-8zM9 10.500h2M12.500 10.500h2M9 12.500h2M12.500 12.500h2" fill="#fff" stroke="#9aa8b8" /></svg>
      <svg class="i16" viewBox="0 0 16 16"><path d="M5 1c1 2 5 2 6 0l5 3-2 4-2-1v8H4V7L2 8 0 4z" fill="#2373bd" /></svg>
      <svg class="i16" viewBox="0 0 16 16"><path d="M1.500 14.500L9 7" stroke="#2373bd" stroke-width="3" stroke-linecap="round" /><path d="M13 1L10.500 3.500l.5 2 2 .5L15.500 3.500c1 4-2 6-5 5S7 2 13 1z" fill="#2373bd" stroke="#2373bd" /></svg>
    </div>

    <div class="poi">
      <div class="poi-title">Poi...<i>×</i></div>
      <button>开始</button>
    </div>
  </div>
</template>

<style>
html, body { overflow: hidden; }
.half { font-family: "DejaVu Sans Mono", monospace; font-size: 10px; white-space: pre; }
</style>

<style scoped>
.app { position: relative; display: flex; flex-direction: column; height: 100vh; overflow: hidden; background: #f0f0f0; font: 12px/16px "Open Sans", "Noto Sans CJK SC", sans-serif; color: #111; white-space: nowrap; }
.app *, .app *::before { box-sizing: border-box; }
.defs { position: absolute; }
button, input, select { font: inherit; color: inherit; margin: 0; padding: 0; border: 0; background: none; border-radius: 0; }
svg { flex: none; }
.i16 { width: 16px; height: 16px; }
.i12 { width: 12px; height: 12px; }
.tri { width: 5px; height: 3px; }
.chev { width: 10px; height: 10px; }
.more { font-size: 15px; font-weight: 600; align-self: flex-start; line-height: 12px; }

.menubar { display: flex; align-items: center; height: 36px; flex: none; border-top: 4px solid #fff; background: linear-gradient(90deg, #f0f0f0 70%, #fbfbfb 78%, #f3f3f3); padding: 0 3px 4px 7px; }
.menus { display: flex; gap: 11px; }
.menu { display: flex; align-items: center; }
.newproj { margin-left: 16px; }
.account { display: flex; align-items: center; margin-left: auto; }
.promo { color: #1d6b6b; text-decoration: none; background: #fff; width: 188px; padding-left: 27px; margin-right: 4px; line-height: 28px; }
.account .phone { margin: 0 11px 0 4px; gap: 8px; }
.beans { margin-right: 7px; }
.account > .more { margin-left: 36px; }

.toolbar { display: flex; align-items: center; flex: none; background: linear-gradient(#fdfdfd, #efefef); }
.tool { display: flex; align-items: center; gap: 4px; }
.tool:disabled { color: #8a8a8a; }
.sep { width: 1px; height: 18px; background: #c4c4c4; flex: none; }
.sep.dark { background: #999; height: 22px; }
.top-tools { height: 27px; padding: 0 0 4px 4px; }
.quick { display: flex; align-items: center; width: 145px; gap: 6px; height: 24px; }
.quick .tool { gap: 6px; }
.quick .more { margin-left: auto; }
.main-tools { display: flex; gap: 7px; margin-left: 8px; width: 531px; }
.view { display: flex; align-items: center; gap: 4px; margin-left: 6px; width: 90px; height: 23px; padding-left: 2px; border: 1px solid #777; color: #999; background: #f3f3f3; }
.view i { width: 15px; height: 11px; border: 1px solid #bbb; border-radius: 2px; background: #e4e4e4; }

.body { display: flex; flex: 1; min-height: 0; }
.dock { display: flex; flex-direction: column; width: 165px; flex: none; padding-top: 1px; border-right: 1px solid #999; border-bottom: 1px solid #999; margin-bottom: 2px; }
.caption { display: flex; align-items: center; justify-content: space-between; height: 15px; border: 1px solid #999; border-left: 0; border-radius: 0 2px 2px 0; font-size: 13px; }
.caption-btns { display: flex; gap: 9px; margin-right: 4px; }
.bar { height: 22px; flex: none; border-top: 1px solid #999; border-left: 1px solid #aaa; box-shadow: inset 1px 1px #fff; line-height: 21px; }
.caption + .bar { margin-top: 1px; }
.expand { display: flex; align-items: center; height: 28px; padding: 2px 0 0 7px; border-top: 1px solid #888; border-left: 1px solid #999; background: linear-gradient(#fdfdfd, #efefef); }
.tree-box { display: flex; flex: 1; min-height: 0; margin: 0 1px 1px 2px; border: 1px solid #828790; background: #fff; }
.tree { flex: 1; overflow: hidden; padding-top: 1px; }
.row { display: flex; align-items: center; height: 16px; }
.branch { padding-left: 6px; }
.lbl { margin-left: 4px; }
.hdots { height: 1px; flex: none; background: repeating-linear-gradient(90deg, #888 0 1px, transparent 1px 2px); }
.branch .hdots { width: 3px; margin-right: 1px; margin-left: 3px; }
.v1, .v2 { width: 1px; height: 16px; flex: none; background: repeating-linear-gradient(#888 0 1px, transparent 1px 2px); }
.v2.last { height: 8px; align-self: flex-start; }
.v1 { margin-left: 12px; }
.leaf .v2 { margin-left: 18px; }
.leaf .hdots { width: 9px; }
.node { display: flex; align-items: center; height: 16px; gap: 4px; padding: 0 3px 0 1px; }
.node.on { background: #d9d9d9; }
.scroll { display: flex; flex-direction: column; align-items: center; width: 16px; padding: 5px 0; background: #f0f0f0; }
.thumb { width: 16px; flex: 0 0 73%; margin-top: auto; margin-bottom: 25px; background: #cdcdcd; }

.work { flex: 1; min-width: 0; display: flex; flex-direction: column; }
.comp-tools { height: 30px; padding: 0 0 2px 10px; gap: 7px; overflow: hidden; }
.comp-tools .sep { margin: 0 -2px 0 -3px; }
.floor { display: flex; align-items: center; gap: 6px; }
.combo { display: flex; align-items: center; width: 62px; height: 22px; background: #fff; padding-right: 5px; }
.combo select { appearance: none; flex: 1; width: 50px; padding-left: 2px; }
.panels { display: flex; flex: 1; min-height: 0; }
.comps { display: flex; flex-direction: column; width: 184px; margin: 1px 3px 3px 6px; border-right: 2px solid #888; border-bottom: 2px solid #888; border-left: 1px solid #999; border-top: 1px solid #ddd; background: #fff; flex: none; }
.find { display: flex; height: 28px; align-items: flex-end; border-bottom: 2px solid #888; }
.find input { width: 158px; height: 25px; border: 1px solid #777; padding: 0 2px 3px; }
.find input::placeholder { color: #777; opacity: 1; }
.find button { flex: 1; height: 22px; display: flex; justify-content: center; }
.comp-tree { flex: 1; padding-top: 2px; }
.croot { padding-left: 6px; }
.croot .hdots { width: 5px; margin-left: 1px; }
.cleaf .v2 { margin-left: 32px; }
.cleaf .hdots { width: 7px; }
.cnode { display: flex; align-items: center; gap: 7px; height: 16px; padding: 0 4px; }
.cnode.on { background: #2f63c5; color: #0c1440; }

.props { flex: 1; display: flex; flex-direction: column; min-width: 0; margin-bottom: 3px; border-bottom: 1px solid #ddd; border-left: 1px solid #ddd; background: #fff; }
.tabs { display: flex; height: 19px; flex: none; }
.tab { width: 62px; background: #fff; border-top: 1px solid #ddd; line-height: 16px; }
.tabs i { flex: 1; background: linear-gradient(#f0f0f0, #fff 2px); border-left: 1px solid #ccc; border-bottom: 1px solid #ccc; }
.sheet { flex: 1; margin: 4px 0 3px 3px; border: 1px solid #999; border-right: 0; }
table { border-collapse: separate; border-spacing: 0; table-layout: fixed; width: 370px; }
.c-n { width: 22px; } .c-name { width: 191px; } .c-val { width: 126px; } .c-add { width: 31px; }
th, td { padding: 0; height: 19px; border-right: 1px solid #b4b4b4; border-bottom: 1px solid #b4b4b4; font-weight: 400; line-height: 16px; }
th { background: linear-gradient(#fdfdfd, #ececec); text-align: center; }
thead th { height: 24px; }
th.hot { background: linear-gradient(#fbdca4, #f0b95c); color: #601030; }
td > div { display: flex; align-items: center; height: 18px; }
.name > div { padding-left: 2px; }
.val > div { padding-left: 2px; }
.plus { width: 13px; height: 13px; margin-right: 4px; border: 1px solid #aaa; background: #fff; display: flex; }
.plus-gap { width: 17px; }
.rebar { margin: 0 1px; }
.rebar.first { margin-left: 3px; }
.add { text-align: center; line-height: 0; }
.add input { appearance: none; width: 13px; height: 13px; border: 1px solid #333; background: #fff; vertical-align: middle; }
.blue .name { color: #1414c8; }
.gray .name, .gray .val { color: #858585; }
.sel .name { background: #0478d7; color: #fff; }
.sel .val { background: #dbe9f7; }
.sel th { background: #fbd08a; color: #603010; }

.strip { display: flex; gap: 2px; height: 6px; flex: none; }
.strip i { border: 1px solid #ccc; border-bottom: 0; }
.s1 { width: 148px; } .s2 { width: 78px; } .s3 { width: 98px; } .s4 { width: 48px; } .s5 { flex: 1; }

.dialog { position: absolute; left: 739px; right: 0; top: 35px; bottom: 13px; display: flex; flex-direction: column; border-top: 1px solid #2f86d8; background: #f0f0f0; box-shadow: 0 3px 10px rgba(0, 0, 0, 0.45); }
.title { height: 30px; flex: none; padding-left: 8px; line-height: 29px; background: #fff; }
.dlg-tools { height: 28px; padding-left: 4px; gap: 7px; overflow: hidden; }
.dlg-tools .sep { margin: 0 -1px; }
.grip { width: 2px; height: 16px; flex: none; background: repeating-linear-gradient(#b5b5b5 0 2px, transparent 2px 4px); }
.dlg-tools .grip { margin-right: -2px; }
.dlg-opts { height: 28px; padding-left: 4px; }
.radio { display: flex; align-items: center; gap: 9px; margin-right: 9px; }
.grip + .radio { margin-left: 3px; }
.radio input { appearance: none; width: 11px; height: 11px; border: 1px solid #777; border-radius: 50%; background: #fff; }
.radio input:checked { border-color: #333; background: radial-gradient(circle, #111 0 2px, #fff 3px); }
.dlg-opts .sep { margin: 0 2px 0 4px; }
.num { display: flex; align-items: center; gap: 8px; margin-right: 11px; }
.spin { display: flex; align-items: center; width: 78px; height: 23px; border: 1px solid #777; background: #f4f4f4; padding-right: 3px; }
.spin input { flex: 1; width: 40px; text-align: right; padding-right: 8px; color: #888; appearance: textfield; }
.spin input::-webkit-inner-spin-button { display: none; }
.canvas { display: block; flex: 1; width: 100%; min-height: 0; background: #000; }
.dims { font: 12px "Liberation Mono", monospace; fill: #c8c8c8; }
.total { font: bold 18px "Liberation Serif", serif; fill: #14f014; text-anchor: middle; }
.dyn { height: 28px; flex: none; border-bottom: 1px solid #999; }
.dyn button { width: 61px; height: 25px; background: #fff; }
.actions { height: 43px; flex: none; display: flex; justify-content: flex-end; padding-top: 10px; border-bottom: 2px solid #fafafa; overflow: hidden; }
.actions button { width: 71px; height: 23px; margin-right: -24px; border: 2px solid #1275c9; background: #e3e6ea; }
.status { display: flex; height: 19px; flex: none; background: linear-gradient(#fff, #eee); line-height: 19px; }
.status span { flex: none; }
.st1, .st2 { border-right: 1px solid #ccc; margin-right: 2px; }
.st1 { width: 148px; padding-left: 2px; } .st2 { width: 148px; padding-left: 2px; } .st3 { padding-left: 1px; }

.ime { position: absolute; left: 794px; top: 14px; display: flex; align-items: center; width: 207px; height: 22px; gap: 6px; background: #fff; border: 1px solid #a9c6e8; }
.logo { margin: 0 -1px 0 0; }
.zh { width: 17px; font: bold 16px/18px "Noto Sans CJK SC", sans-serif; color: #2373bd; }

.poi { position: absolute; right: 1px; top: 41px; width: 54px; display: flex; flex-direction: column; background: #fff; box-shadow: 0 0 8px rgba(0, 0, 0, 0.5); }
.poi-title { display: flex; align-items: center; justify-content: space-between; height: 24px; padding: 0 2px 3px 4px; color: #999; font-size: 13px; }
.poi-title i { width: 18px; line-height: 19px; text-align: center; font-style: normal; font-size: 11px; background: #e6e6e6; color: #fafafa; }
.poi button { height: 23px; background: #f0f0f0; border: 1px solid #777; border-right: 2px solid #555; border-bottom: 2px solid #555; line-height: 18px; }
</style>
